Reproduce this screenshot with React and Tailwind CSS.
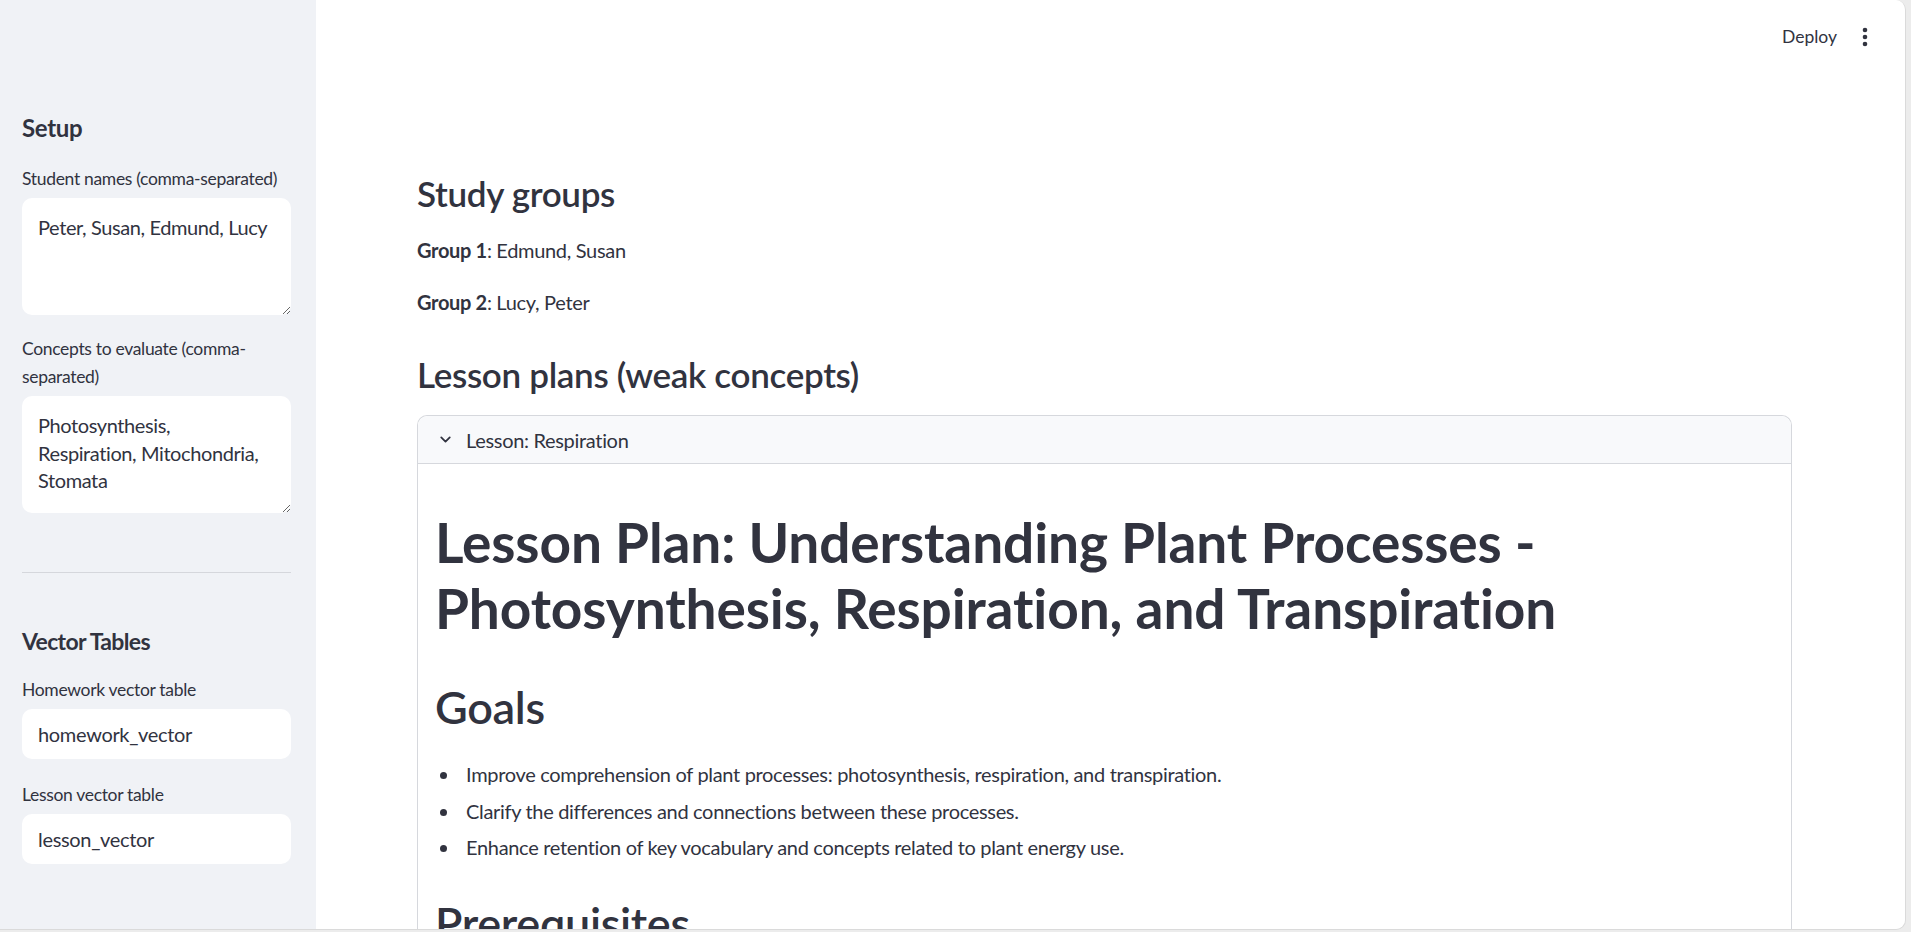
import React from 'react';
import { ChevronDown } from 'lucide-react';

const FONT = "font-['Lato','Noto_Sans',sans-serif]";

function Label({ children }) {
    return <div className="text-[17.5px] leading-[28px] text-[#31333f]">{children}</div>;
}

// narrow: extra right padding so the long concept list wraps like Source Sans does
function TextArea({ value, narrow }) {
    return (
        <textarea
            readOnly
            value={value}
            className={`${FONT} mt-[5px] block h-[117px] w-full resize-y rounded-[10px] bg-white pl-[16px] ${narrow ? 'pr-[26px]' : 'pr-[12px]'} pt-[16px] text-[20px] leading-[27.5px] tracking-[-0.02em] text-[#31333f] outline-none`}
        />
    );
}

function TextInput({ value }) {
    return (
        <div className="mt-[5px] flex h-[50px] items-center rounded-[10px] bg-white px-[16px] text-[20px] text-[#31333f]">
            {value}
        </div>
    );
}

function Sidebar() {
    return (
        <aside className="w-[316px] shrink-0 bg-[#f0f2f6] pl-[22px] pr-[25px] pt-[113px]">
            <h2 className="text-[24px] font-bold leading-[29px] text-[#31333f]">Setup</h2>
            <div className="mt-[23px]">
                <Label>Student names (comma-separated)</Label>
                <TextArea value="Peter, Susan, Edmund, Lucy" />
            </div>
            <div className="mt-[20px]">
                <Label>Concepts to evaluate (comma-<br />separated)</Label>
                <TextArea narrow value="Photosynthesis, Respiration, Mitochondria, Stomata" />
            </div>
            <hr className="mt-[59px] border-0 border-t border-[#d5d7dc]" />
            <h2 className="mt-[54px] text-[23px] font-bold leading-[29px] tracking-[-0.028em] text-[#31333f]">Vector Tables</h2>
            <div className="mt-[20px]">
                <Label>Homework vector table</Label>
                <TextInput value="homework_vector" />
            </div>
            <div className="mt-[22px]">
                <Label>Lesson vector table</Label>
                <TextInput value="lesson_vector" />
            </div>
        </aside>
    );
}

const GOALS = [
    'Improve comprehension of plant processes: photosynthesis, respiration, and transpiration.',
    'Clarify the differences and connections between these processes.',
    'Enhance retention of key vocabulary and concepts related to plant energy use.',
];

function LessonExpander() {
    return (
        <div className="mt-[20px] rounded-t-[10px] border border-b-0 border-[#d6d8dd]">
            <div className="flex h-[48px] items-center gap-[12px] rounded-t-[10px] border-b border-[#d6d8dd] bg-[#f8f9fb] pl-[19px] text-[20px] text-[#31333f]">
                <ChevronDown size={17} strokeWidth={2.5} />
                <span>Lesson: Respiration</span>
            </div>
            <div className="px-[17px] pt-[45px] text-[#31333f]">
                <h1 className="text-[55px] font-bold leading-[66px] tracking-[-0.002em]">
                    Lesson Plan: Understanding Plant Processes -<br />
                    Photosynthesis, Respiration, and Transpiration
                </h1>
                <h2 className="mt-[39px] text-[45px] font-semibold leading-[54px]">Goals</h2>
                <ul className="mt-[24px] list-disc pl-[25px] text-[20px] leading-[32px]">
                    {GOALS.map((g, i) => (
                        <li key={i} className="mb-[4.5px] pl-[6px] marker:text-[#31333f]">{g}</li>
                    ))}
                </ul>
                <h2 className="mt-[33px] text-[45px] font-semibold leading-[54px]">Prerequisites</h2>
            </div>
        </div>
    );
}

function Main() {
    return (
        <main className="relative flex-1 overflow-hidden bg-white">
            <div className="flex h-[74px] items-center justify-end gap-[24px] pr-[36px]">
                <span className="text-[17.5px] tracking-normal text-[#31333f]">Deploy</span>
                <svg width="8" height="22" viewBox="0 0 8 22" className="fill-[#31333f]">
                    <circle cx="4" cy="4" r="2.3" />
                    <circle cx="4" cy="11" r="2.3" />
                    <circle cx="4" cy="18" r="2.3" />
                </svg>
            </div>
            <div className="pl-[101px] pr-[113px] pt-[98px] text-[#31333f]">
                <h3 className="text-[35px] font-semibold leading-[42px]">Study groups</h3>
                <p className="mt-[20px] text-[20px] leading-[32px]"><strong className="font-bold">Group 1</strong>: Edmund, Susan</p>
                <p className="mt-[20px] text-[20px] leading-[32px]"><strong className="font-bold">Group 2</strong>: Lucy, Peter</p>
                <h3 className="mt-[35px] text-[35px] font-semibold leading-[42px]">Lesson plans (weak concepts)</h3>
                <LessonExpander />
            </div>
        </main>
    );
}

export default function App() {
    return (
        <div className={`${FONT} h-[932px] w-full overflow-hidden bg-[#ececec] tracking-[-0.02em]`}>
            <div className="flex h-[930px] w-[1906px] overflow-hidden rounded-r-[10px] border-r border-b border-[#dadada]">
                <Sidebar />
                <Main />
            </div>
        </div>
    );
}
